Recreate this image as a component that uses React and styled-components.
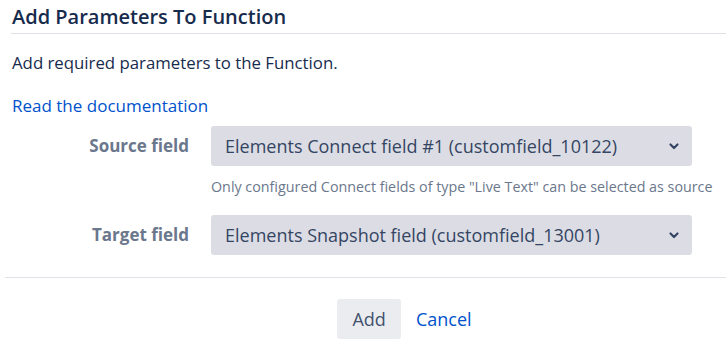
import React from "react";
import styled, { createGlobalStyle } from "styled-components";

const Global = createGlobalStyle`
  html, body { margin: 0; padding: 0; background: #fff; }
  body { font-family: "Open Sans", "Noto Sans", sans-serif; color: #172B4D; }
  * { box-sizing: border-box; }
`;

const Dialog = styled.div`
  width: 726px;
  height: 357px;
  padding: 0 0 0 5px;
  display: flex;
  flex-direction: column;
`;

const Header = styled.h2`
  margin: 0 0 0 6px;
  padding: 7px 0 6px 1px;
  font-size: 20px;
  font-weight: 600;
  line-height: 20px;
  color: #172B4D;
  border-bottom: 1px solid #dfe1e6;
`;

const Body = styled.div`
  padding: 0 0 0 7px;
  display: flex;
  flex-direction: column;
`;

const Intro = styled.p`
  margin: 18px 0 0;
  font-size: 16.8px;
  line-height: 22px;
  color: #172B4D;
`;

const DocLink = styled.a`
  margin-top: 21px;
  font-size: 17px;
  line-height: 22px;
  color: #0052CC;
  text-decoration: none;
  align-self: flex-start;
`;

const Form = styled.div`
  margin-top: 9px;
  display: grid;
  grid-template-columns: 177px 481px;
  column-gap: 22px;
  row-gap: 0;
  align-items: start;
`;

const Label = styled.label`
  text-align: right;
  font-size: 17px;
  font-weight: 700;
  color: #6B778C;
  line-height: 40px;
`;

const FieldCol = styled.div`
  display: flex;
  flex-direction: column;
  margin-bottom: ${(p) => p.$mb || 0}px;
`;

const Select = styled.div`
  height: 40px;
  border-radius: 3px;
  background: #dcdde4;
  display: flex;
  align-items: center;
  justify-content: space-between;
  padding: 0 12px 0 14px;
  font-size: 18px;
  color: #344563;
`;

const Help = styled.div`
  margin-top: 11px;
  font-size: 14.3px;
  line-height: 20px;
  color: #6B778C;
  white-space: nowrap;
`;

const Divider = styled.hr`
  margin: 22px 0 0;
  border: 0;
  border-top: 1px solid #dfe1e6;
  height: 0;
`;

const Footer = styled.div`
  display: flex;
  justify-content: center;
  align-items: center;
  gap: 15px;
  margin-top: 21px;
  padding-left: 78px;
`;

const Button = styled.button`
  height: 40px;
  padding: 0 15px;
  border: 0;
  border-radius: 3px;
  background: #ebecf0;
  font-family: inherit;
  font-size: 18px;
  color: #42526E;
`;

const LinkButton = styled.a`
  font-size: 18px;
  color: #0052CC;
  text-decoration: none;
`;

const Chevron = () => (
  <svg width="12" height="12" viewBox="0 0 12 12">
    <path d="M2.5 4.5 L6 8 L9.5 4.5" fill="none" stroke="#344563" strokeWidth="2.2" strokeLinecap="round" strokeLinejoin="round" />
  </svg>
);

export default function App() {
  return (
    <>
      <Global />
      <Dialog>
        <Header>Add Parameters To Function</Header>
        <Body>
          <Intro>Add required parameters to the Function.</Intro>
          <DocLink href="#">Read the documentation</DocLink>
          <Form>
            <Label>Source field</Label>
            <FieldCol $mb={18}>
              <Select>
                <span>Elements Connect field #1 (customfield_10122)</span>
                <Chevron />
              </Select>
              <Help>Only configured Connect fields of type "Live Text" can be selected as source</Help>
            </FieldCol>
            <Label>Target field</Label>
            <FieldCol>
              <Select>
                <span>Elements Snapshot field (customfield_13001)</span>
                <Chevron />
              </Select>
            </FieldCol>
          </Form>
        </Body>
        <Divider />
        <Footer>
          <Button>Add</Button>
          <LinkButton href="#">Cancel</LinkButton>
        </Footer>
      </Dialog>
    </>
  );
}
